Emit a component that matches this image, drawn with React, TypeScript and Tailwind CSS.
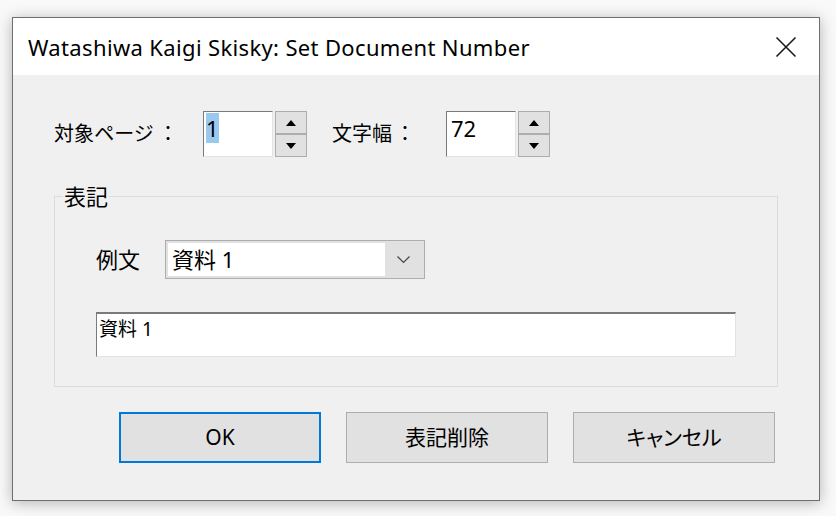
const ui = "font-['Noto_Sans','Noto_Sans_CJK_JP',sans-serif] [font-feature-settings:'palt']";

const SpinBox = ({ value, selected }: { value: string; selected?: boolean }) => (
    <div className="flex items-stretch gap-[2px]">
        <div className="w-[70px] h-[46px] bg-white border border-[#7a7a7a] border-r-[#e3e3e3] border-b-[#e3e3e3] pl-[2px] pt-px">
            <span
                className={`inline-block h-[30px] leading-[30px] text-[22px] text-black ${
                    selected ? 'bg-[#99c9ef]' : 'pl-[2px]'
                }`}
            >
                {value}
            </span>
        </div>
        <div className="flex flex-col w-[32px]">
            <button className="h-[23px] flex items-center justify-center bg-[#e1e1e1] border border-[#adadad]">
                <svg width="10" height="6" viewBox="0 0 10 6">
                    <path d="M0 6 L5 0 L10 6 Z" fill="#000" />
                </svg>
            </button>
            <button className="h-[23px] flex items-center justify-center bg-[#e1e1e1] border border-[#adadad]">
                <svg width="10" height="6" viewBox="0 0 10 6">
                    <path d="M0 0 L10 0 L5 6 Z" fill="#000" />
                </svg>
            </button>
        </div>
    </div>
);

const DialogButton = ({ label, primary }: { label: string; primary?: boolean }) => (
    <button
        className={`w-[202px] h-[51px] bg-[#e1e1e1] text-[21px] text-black flex items-center justify-center ${
            primary ? 'border-2 border-[#0078d7]' : 'border border-[#adadad]'
        }`}
    >
        {label}
    </button>
);

export default function App() {
    return (
        <div className={`w-[836px] h-[516px] bg-[#f9f9f9] pt-[17px] pl-[12px] ${ui}`}>
            <div className="w-[808px] h-[484px] border border-[#6e6e6e] bg-[#f0f0f0] flex flex-col shadow-[0_2px_14px_rgba(0,0,0,0.28)]">
                {/* title bar */}
                <div className="h-[57px] bg-white flex items-center justify-between pl-[15px] pr-[22px]">
                    <span className="text-[22px] text-black tracking-[0.35px] pt-[2px]">
                        Watashiwa Kaigi Skisky: Set Document Number
                    </span>
                    <svg width="22" height="22" viewBox="0 0 22 22">
                        <path d="M1.5 1.5 L20.5 20.5 M20.5 1.5 L1.5 20.5" stroke="#1a1a1a" strokeWidth="1.6" />
                    </svg>
                </div>

                <div className="flex-1 px-[41px] pt-[36px]">
                    {/* page / width row */}
                    <div className="flex items-center h-[46px]">
                        <span className="w-[149px] flex text-[20px] text-black">
                            <span>対象ページ</span>
                            <span className="ml-auto mr-[25px] [font-feature-settings:normal]">：</span>
                        </span>
                        <SpinBox value="1" selected />
                        <span className="ml-[25px] w-[114px] flex text-[20px] text-black">
                            <span>文字幅</span>
                            <span className="ml-auto mr-[31px] [font-feature-settings:normal]">：</span>
                        </span>
                        <SpinBox value="72" />
                    </div>

                    {/* notation group */}
                    <fieldset className="mt-[27px] border border-[#dcdcdc] pl-[41px] pr-[41px] pb-[29px]">
                        <legend className="-ml-[33px] px-px text-[22px] leading-[24px] text-black">表記</legend>
                        <div className="flex items-center mt-[32px] h-[39px]">
                            <span className="w-[69px] text-[22px] text-black">例文</span>
                            <div className="w-[260px] h-[39px] border border-[#adadad] bg-[#e1e1e1] flex items-stretch p-[2px]">
                                <div className="flex-1 bg-white flex items-center pl-[4px] text-[22px] text-black">
                                    資料 1
                                </div>
                                <div className="w-[37px] flex items-center justify-center">
                                    <svg width="13" height="8" viewBox="0 0 13 8">
                                        <path d="M0.5 0.5 L6.5 6.5 L12.5 0.5" fill="none" stroke="#444" strokeWidth="1.2" />
                                    </svg>
                                </div>
                            </div>
                        </div>
                        <div className="mt-[33px] h-[45px] bg-white border border-[#7a7a7a] border-t-2 border-r-[#e3e3e3] border-b-[#e3e3e3] pl-[2px] text-[19px] leading-[30px] text-black">
                            資料 1
                        </div>
                    </fieldset>

                    {/* actions */}
                    <div className="flex gap-[25px] mt-[25px] pl-[65px]">
                        <DialogButton label="OK" primary />
                        <DialogButton label="表記削除" />
                        <DialogButton label="キャンセル" />
                    </div>
                </div>
            </div>
        </div>
    );
}
